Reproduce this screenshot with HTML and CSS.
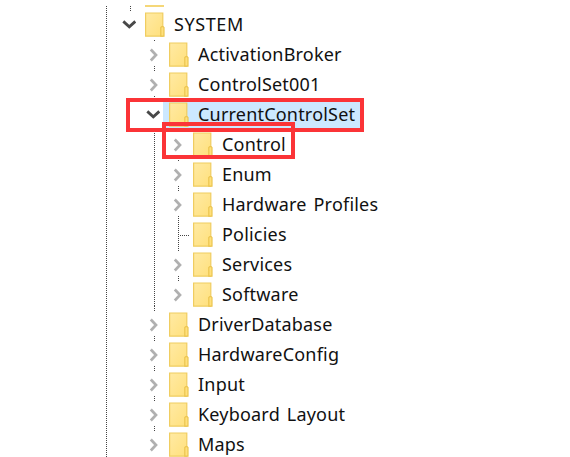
FILE: index.html
```
<!DOCTYPE html>
<html lang="en">
<head>
  <meta charset="UTF-8">
  <title>Registry Editor</title>
  <link rel="stylesheet" href="styles.css">
</head>
<body>

  <svg class="symbols" width="0" height="0">
    <symbol id="folder" viewBox="0 0 20 25">
      <linearGradient id="paper" x1="0" y1="0" x2="1" y2="1">
        <stop offset="0" stop-color="#ffeaa4"/>
        <stop offset="1" stop-color="#ffe07c"/>
      </linearGradient>
      <path d="M.6 1h17.2v23.2H.6z" fill="url(#paper)" stroke="#f0cd60" stroke-width="1.2"/>
      <path d="M15.8 24.2v-8.6l1-1h1.2l1 1v8.6z" fill="#ffe07c" stroke="#ecc550" stroke-width="1.2"/>
    </symbol>
    <symbol id="closed" viewBox="0 0 14 14">
      <path d="M4.8 1.5l5.2 5.5-5.2 5.5" fill="none" stroke="#b0b0b0" stroke-width="2.7"/>
    </symbol>
    <symbol id="open" viewBox="0 0 14 14">
      <path d="M1.3 3.4l6 5.4 6-5.4" fill="none" stroke="#484848" stroke-width="2.8"/>
    </symbol>
  </svg>

  <div class="tree">
    <div class="previous"><i></i><b></b></div>

    <div class="row root"><svg class="arrow"><use href="#open"/></svg><svg class="folder"><use href="#folder"/></svg><span class="label">SYSTEM</span></div>
    <div class="children">
      <div class="row first"><svg class="arrow"><use href="#closed"/></svg><svg class="folder"><use href="#folder"/></svg><span class="label">ActivationBroker</span></div>
      <div class="row"><svg class="arrow"><use href="#closed"/></svg><svg class="folder"><use href="#folder"/></svg><span class="label">ControlSet001</span></div>
      <div class="row selected"><svg class="arrow"><use href="#open"/></svg><svg class="folder"><use href="#folder"/></svg><span class="label">CurrentControlSet</span><div class="mark mark-set"></div></div>
      <div class="children branch">
        <div class="row first"><svg class="arrow"><use href="#closed"/></svg><svg class="folder"><use href="#folder"/></svg><span class="label">Control</span><div class="mark mark-control"></div></div>
        <div class="row"><svg class="arrow"><use href="#closed"/></svg><svg class="folder"><use href="#folder"/></svg><span class="label">Enum</span></div>
        <div class="row"><svg class="arrow"><use href="#closed"/></svg><svg class="folder"><use href="#folder"/></svg><span class="label">Hardware Profiles</span></div>
        <div class="row leaf"><i class="arrow"></i><svg class="folder"><use href="#folder"/></svg><span class="label">Policies</span></div>
        <div class="row"><svg class="arrow"><use href="#closed"/></svg><svg class="folder"><use href="#folder"/></svg><span class="label">Services</span></div>
        <div class="row"><svg class="arrow"><use href="#closed"/></svg><svg class="folder"><use href="#folder"/></svg><span class="label">Software</span></div>
      </div>
      <div class="row"><svg class="arrow"><use href="#closed"/></svg><svg class="folder"><use href="#folder"/></svg><span class="label">DriverDatabase</span></div>
      <div class="row"><svg class="arrow"><use href="#closed"/></svg><svg class="folder"><use href="#folder"/></svg><span class="label">HardwareConfig</span></div>
      <div class="row"><svg class="arrow"><use href="#closed"/></svg><svg class="folder"><use href="#folder"/></svg><span class="label">Input</span></div>
      <div class="row"><svg class="arrow"><use href="#closed"/></svg><svg class="folder"><use href="#folder"/></svg><span class="label">Keyboard Layout</span></div>
      <div class="row"><svg class="arrow"><use href="#closed"/></svg><svg class="folder"><use href="#folder"/></svg><span class="label">Maps</span></div>
    </div>
  </div>

</body>
</html>
```
FILE: styles.css
```
body {
  margin: 0;
  height: 457px;
  overflow: hidden;
  background: #fff;
  color: #111;
  font-family: "Noto Sans", sans-serif;
  font-size: 18px;
}

.symbols {
  position: absolute;
}

.tree {
  --dots: repeating-linear-gradient(#444 0 1px, #fff 1px 2px);
  box-sizing: border-box;
  height: 451px;
  margin: 6px 0 0 106px;
  padding-left: 16px;
  background: var(--dots) 0 0 / 1px 100% no-repeat;
}

.previous {
  display: flex;
  height: 3px;
}

.previous i {
  width: 1px;
  height: 5px;
  margin: 0 14px 0 8px;
  background: var(--dots);
}

.previous b {
  width: 19px;
  height: 2px;
  margin-top: -1px;
  background: #f5d778;
}

.row {
  position: relative;
  display: flex;
  align-items: center;
  height: 30px;
}

/* connector between two expander arrows */
.row::before {
  content: "";
  position: absolute;
  left: 8px;
  top: -3px;
  width: 1px;
  height: 5px;
  background: var(--dots);
}

.row.root::before {
  display: none;
}

.row.first::before {
  top: 1px;
  height: 1px;
}

.children {
  padding-left: 24px;
}

.branch {
  background: var(--dots) 8px 0 / 1px 100% no-repeat;
}

.arrow {
  flex: none;
  width: 14px;
  height: 14px;
  margin: 1px 9px 0 0;
}

.folder {
  flex: none;
  width: 20px;
  height: 25px;
  margin-right: 9px;
}

.label {
  line-height: 30px;
  white-space: nowrap;
  letter-spacing: 0.2px;
  word-spacing: 2px;
}

.root .label {
  letter-spacing: 0.6px;
}

.selected::after {
  content: "";
  position: absolute;
  z-index: -1;
  left: 17px;
  top: 2px;
  width: 198px;
  height: 28px;
  background: #cce8ff;
}

/* red frames around the keys to open */
.mark {
  position: absolute;
  z-index: 1;
  box-sizing: border-box;
  border: 4px solid #fb3437;
}

.mark-set {
  left: -20px;
  top: -1px;
  width: 238px;
  height: 34px;
}

.mark-control {
  left: -8px;
  top: -7px;
  width: 133px;
  height: 37px;
}

.leaf::before {
  height: 35px;
}

.leaf::after {
  content: "";
  position: absolute;
  left: 10px;
  top: 16px;
  width: 9px;
  height: 1px;
  background: repeating-linear-gradient(90deg, #444 0 1px, #fff 1px 2px);
}
```
